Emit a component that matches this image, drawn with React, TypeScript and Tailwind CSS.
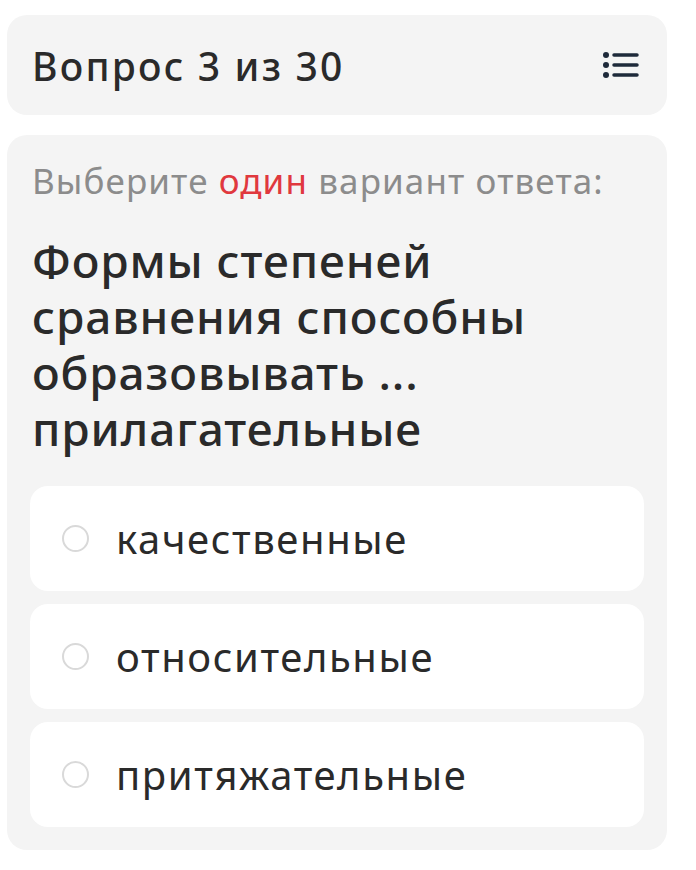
import React from "react";

const options = ["качественные", "относительные", "притяжательные"];

export default function App() {
  return (
    <div
      className="w-[696px] h-[870px] bg-white pt-[15px] px-[7px] flex flex-col gap-[20px] text-[#2a2a2a]"
      style={{ fontFamily: "'Noto Sans', sans-serif" }}
    >
      <div className="h-[100px] w-[660px] rounded-[20px] bg-[#f4f4f4] flex items-center justify-between pl-[25px] pr-[26px]">
        <div className="text-[39px] font-medium leading-none tracking-[2.2px]">Вопрос 3 из 30</div>
        <svg width="40" height="30" viewBox="0 0 40 30">
          <circle cx="5" cy="5" r="3" fill="#1e2a3a" />
          <circle cx="5" cy="15" r="3" fill="#1e2a3a" />
          <circle cx="5" cy="25" r="3" fill="#1e2a3a" />
          <line x1="13" y1="5" x2="36" y2="5" stroke="#1e2a3a" strokeWidth="3.5" strokeLinecap="round" />
          <line x1="13" y1="15" x2="36" y2="15" stroke="#1e2a3a" strokeWidth="3.5" strokeLinecap="round" />
          <line x1="13" y1="25" x2="36" y2="25" stroke="#1e2a3a" strokeWidth="3.5" strokeLinecap="round" />
        </svg>
      </div>
      <div className="w-[660px] h-[715px] rounded-[20px] bg-[#f4f4f4] pt-[24px] px-[23px] flex flex-col">
        <div className="pl-[2px] text-[35px] leading-[44px] text-[#8c8c8c] tracking-[1.1px]">
          Выберите <span className="text-[#e0383e]">один</span> вариант ответа:
        </div>
        <div className="mt-[29px] pl-[2px] text-[46px] leading-[56px] font-medium tracking-[0.9px]">
          Формы степеней сравнения способны образовывать ... прилагательные
        </div>
        <div className="mt-[30px] flex flex-col gap-[13px]">
          {options.map((o) => (
            <div key={o} className="h-[105px] rounded-[18px] bg-white flex items-center pl-[32px]">
              <div className="w-[27px] h-[27px] rounded-full border-2 border-[#d9d9d9] bg-white" />
              <div className="ml-[27px] text-[40px] leading-none tracking-[1.6px]">{o}</div>
            </div>
          ))}
        </div>
      </div>
    </div>
  );
}
